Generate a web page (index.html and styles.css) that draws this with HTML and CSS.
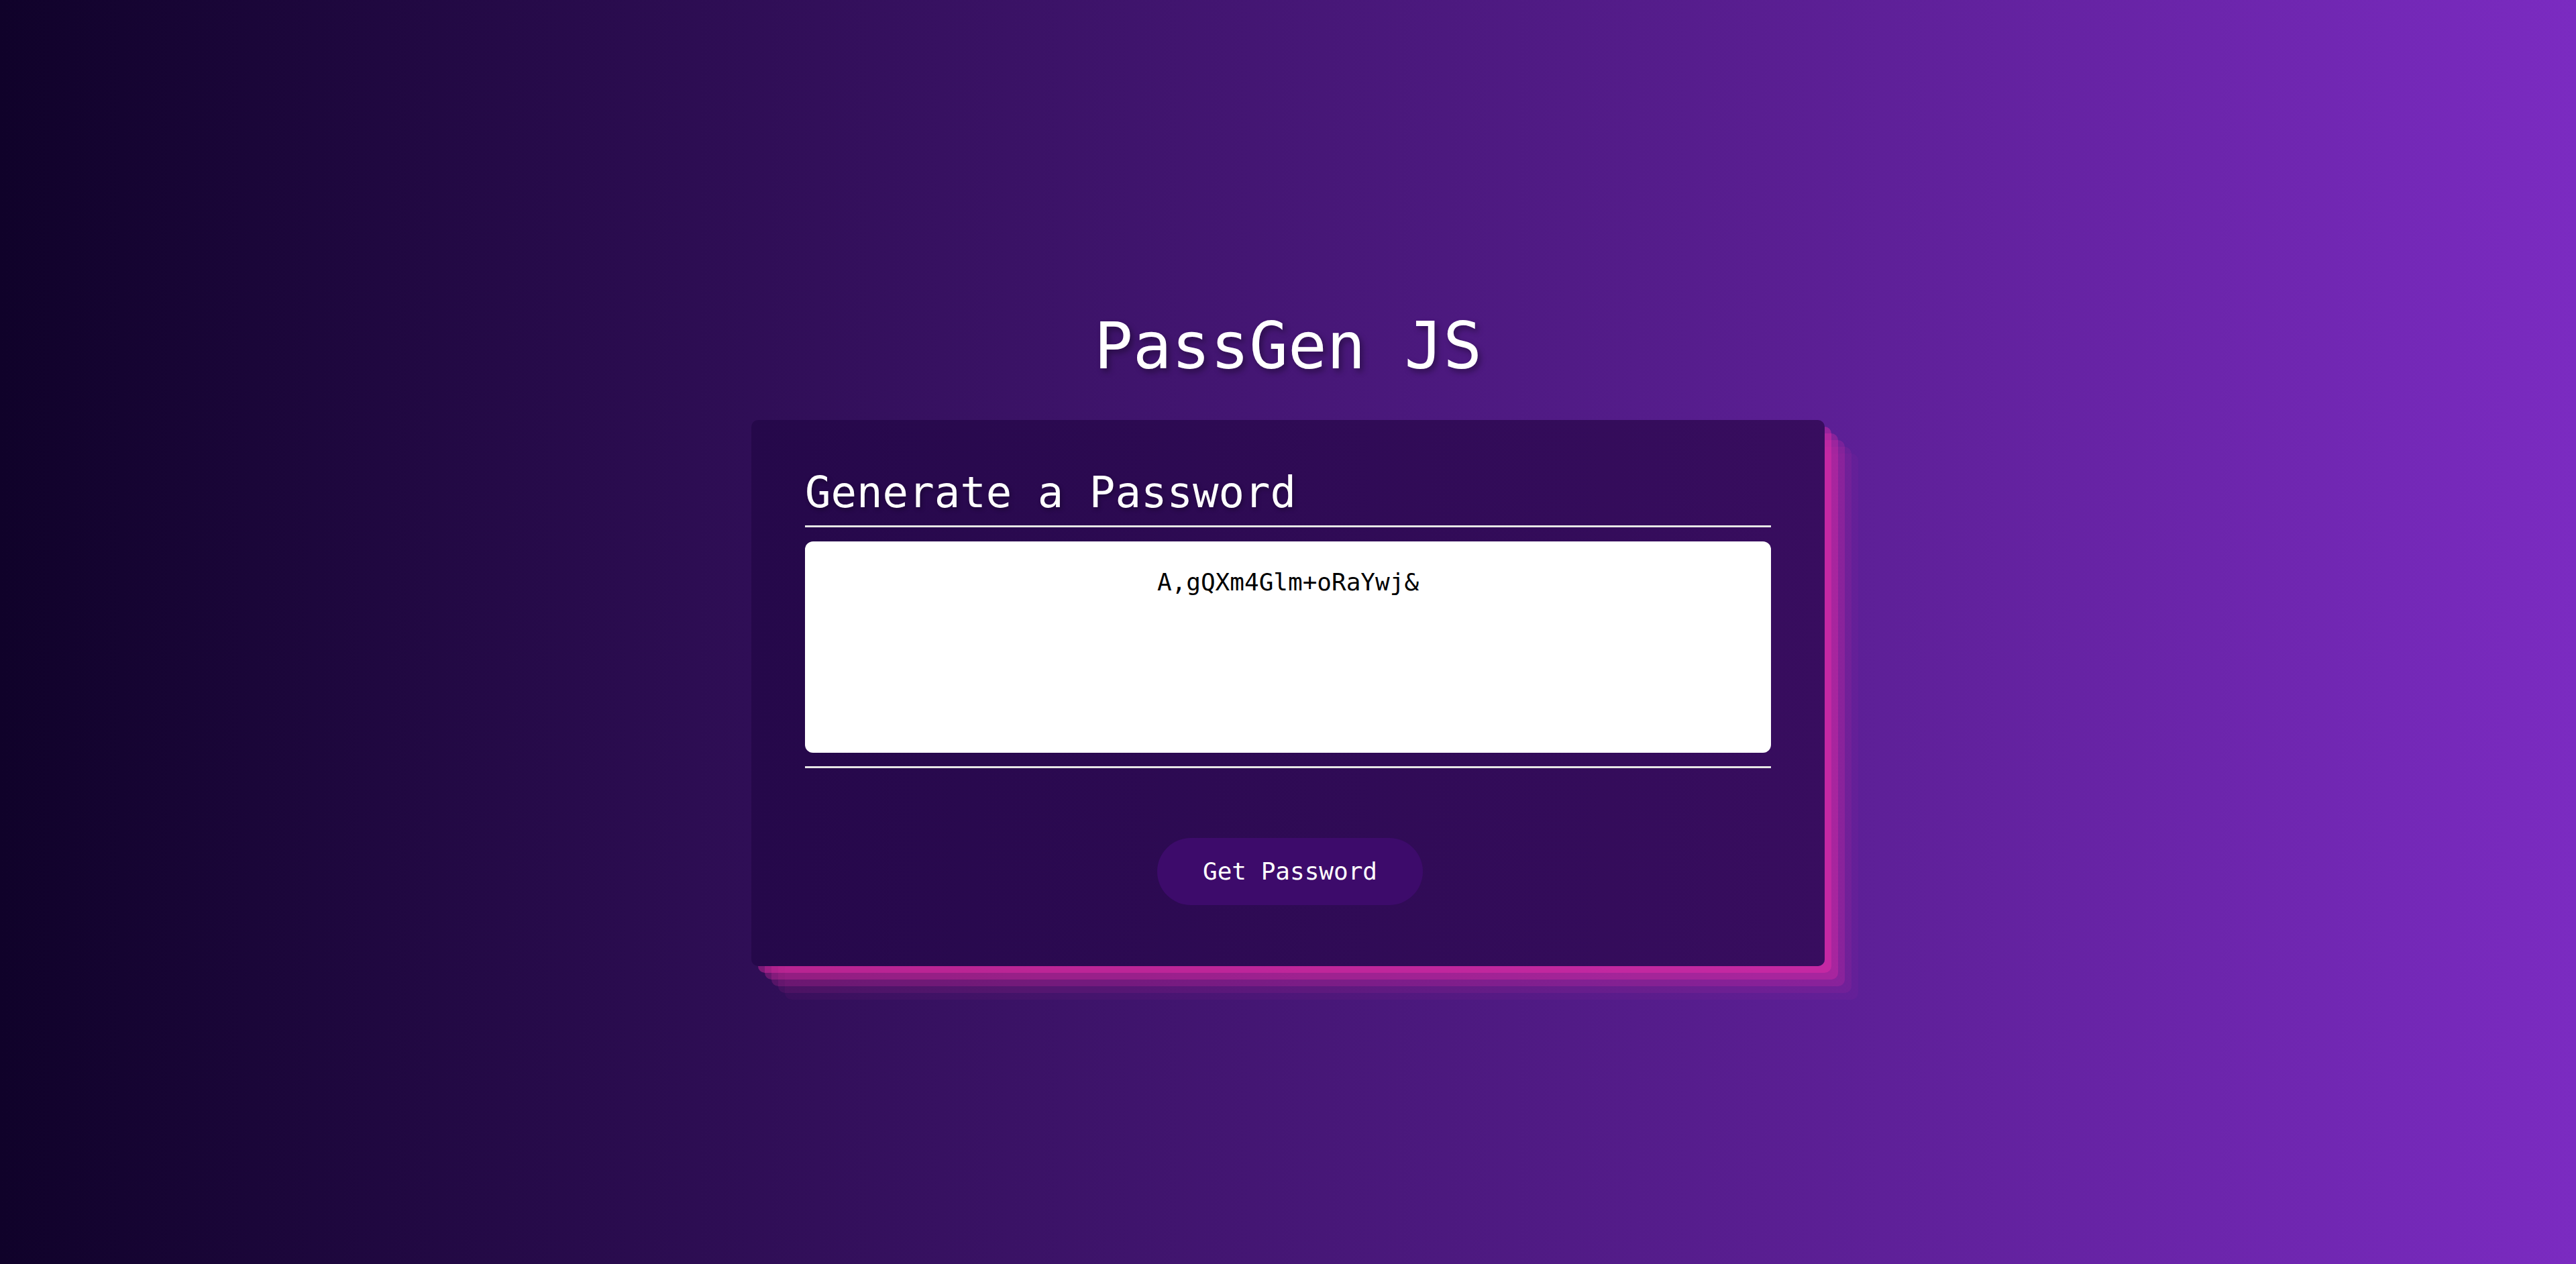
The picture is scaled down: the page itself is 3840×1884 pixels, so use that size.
FILE: index.html
```html
<!DOCTYPE html>
<html lang="en">
<head>
<meta charset="utf-8">
<title>PassGen JS</title>
<link rel="stylesheet" href="styles.css">
</head>
<body>
  <div class="wrapper">
    <h1 class="title">PassGen JS</h1>
    <div class="card">
      <div class="card-header">
        <h2 class="card-title">Generate a Password</h2>
      </div>
      <div class="card-body">
        <textarea class="password" readonly aria-label="Generated Password">A,gQXm4Glm+oRaYwj&amp;</textarea>
      </div>
      <div class="card-footer">
        <button class="btn" type="button">Get Password</button>
      </div>
    </div>
  </div>
</body>
</html>
```
FILE: styles.css
```css
html, body {
  margin: 0;
  padding: 0;
  height: 100%;
}

body {
  background: linear-gradient(to right, #10022a 0%, #7b2bc1 100%);
  font-family: "DejaVu Sans Mono", "Liberation Mono", monospace;
  color: #ffffff;
}

.wrapper {
  display: flex;
  flex-direction: column;
  align-items: center;
  padding-top: 459px;
}

.title {
  margin: 0;
  font-size: 96px;
  font-weight: 400;
  line-height: 1.2;
  text-shadow: 4px 5px 8px rgba(0, 0, 0, 0.35);
}

.card {
  margin-top: 52px;
  width: 1600px;
  box-sizing: border-box;
  padding: 70px 80px 91px;
  border-radius: 10px;
  background: linear-gradient(to right, #25084a 0%, #380d5f 100%);
  box-shadow:
    rgba(240, 46, 170, 0.4) 10px 10px,
    rgba(240, 46, 170, 0.3) 20px 20px,
    rgba(240, 46, 170, 0.2) 30px 30px,
    rgba(240, 46, 170, 0.1) 40px 40px,
    rgba(240, 46, 170, 0.05) 50px 50px;
}

.card-header {
  border-bottom: 3px solid #e6e6e6;
  padding-bottom: 10px;
}

.card-title {
  margin: 0;
  font-size: 64px;
  font-weight: 300;
  line-height: 1.2;
  text-shadow: 2px 3px 6px rgba(0, 0, 0, 0.3);
}

.card-body {
  padding-top: 21px;
  padding-bottom: 20px;
  border-bottom: 3px solid #e6e6e6;
}

.password {
  display: block;
  width: 100%;
  height: 315px;
  box-sizing: border-box;
  margin: 0;
  padding: 39px 20px 20px;
  border: none;
  border-radius: 12px;
  background: #ffffff;
  color: #000000;
  font-family: "DejaVu Sans Mono", "Liberation Mono", monospace;
  font-size: 36px;
  line-height: 1.2;
  text-align: center;
  resize: none;
  outline: none;
}

.card-footer {
  display: flex;
  justify-content: center;
  padding-top: 104px;
  padding-left: 6px;
}

.btn {
  height: 100px;
  padding: 0 68px;
  border: none;
  border-radius: 50px;
  background: #3d0b6b;
  color: #ffffff;
  font-family: "DejaVu Sans Mono", "Liberation Mono", monospace;
  font-size: 36px;
  cursor: pointer;
}
```
